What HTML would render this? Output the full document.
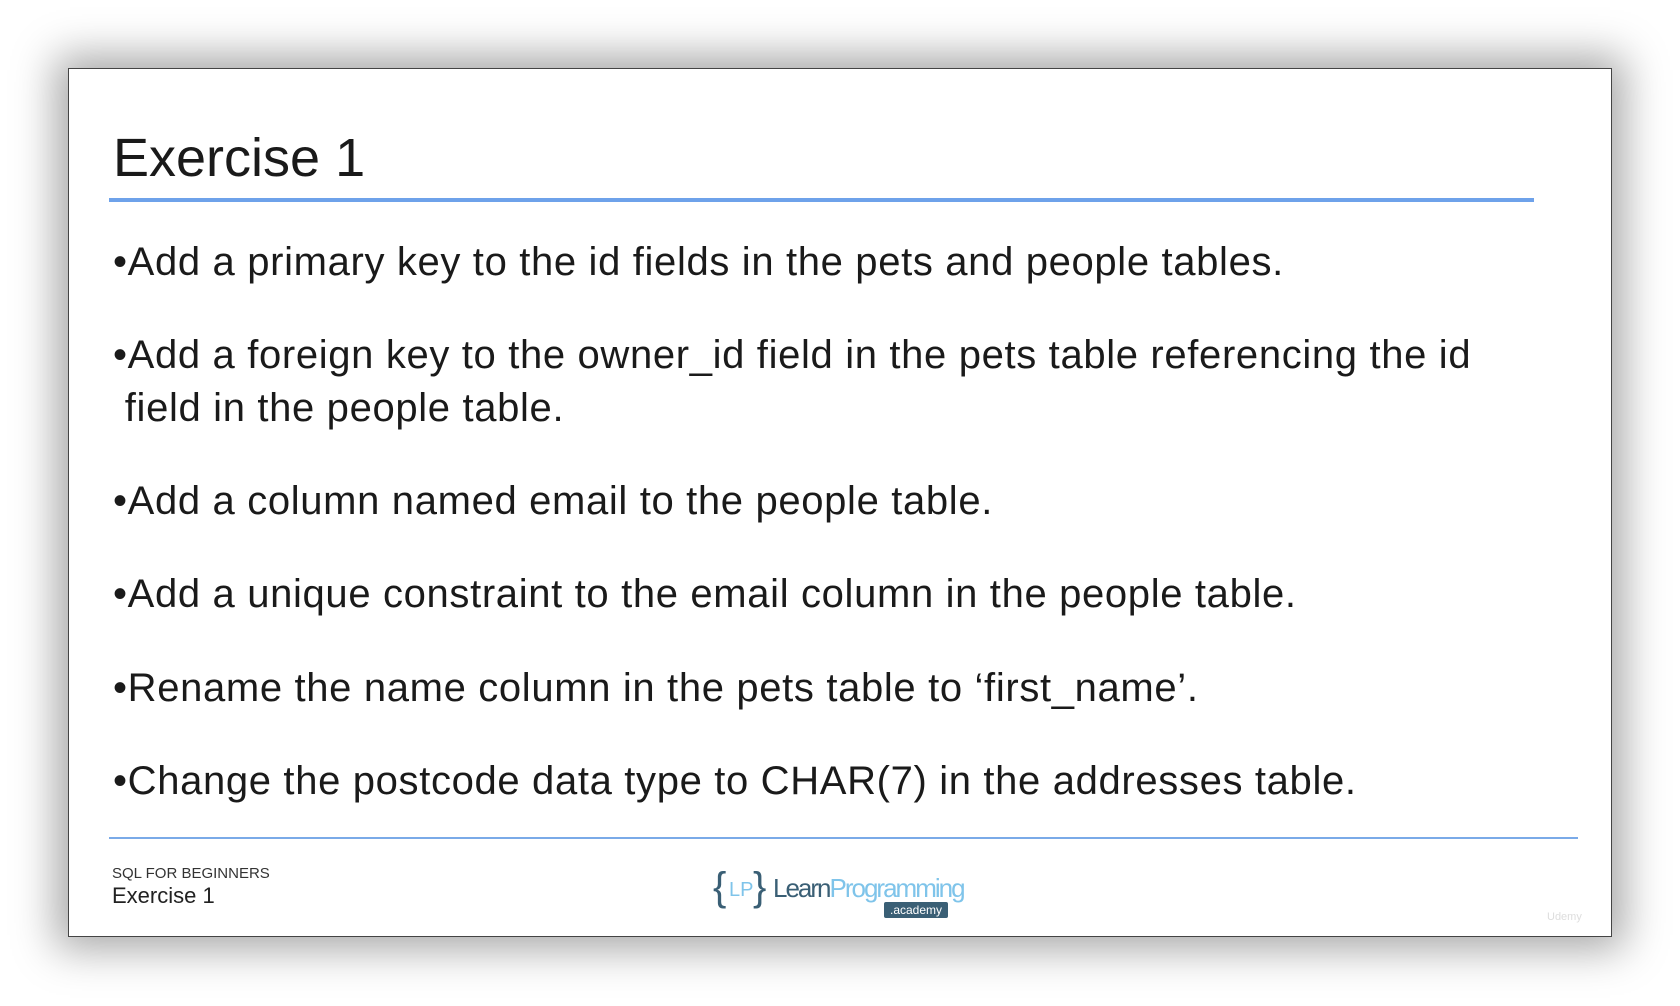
<!DOCTYPE html>
<html><head><meta charset="utf-8"><style>
html,body{margin:0;padding:0;width:1680px;height:1006px;background:#fff;overflow:hidden;font-family:"Liberation Sans",sans-serif;}
.slide{position:absolute;left:68px;top:68px;width:1544px;height:869px;background:#fff;box-shadow:0 0 40px 12px rgba(0,0,0,0.35);border:1px solid #444;box-sizing:border-box;}
.t{position:absolute;white-space:nowrap;color:#1a1a1a;}
.h{left:44px;top:89px;font-size:54px;line-height:0;}
.line1{position:absolute;left:40px;top:129px;width:1425px;height:4px;background:#6ea2ea;}
.line2{position:absolute;left:40px;top:768px;width:1469px;height:2px;background:#7aaae8;}
.b{left:44px;font-size:40px;line-height:0;letter-spacing:0.65px;}
</style></head><body>
<div class="slide">
<div class="t h">Exercise 1</div>
<div class="line1"></div>
<div class="t b" style="top:193px">•Add a primary key to the id fields in the pets and people tables.</div>
<div class="t b" style="top:286px">•Add a foreign key to the owner_id field in the pets table referencing the id</div>
<div class="t b" style="top:339px">&nbsp;field in the people table.</div>
<div class="t b" style="top:432px">•Add a column named email to the people table.</div>
<div class="t b" style="top:525px">•Add a unique constraint to the email column in the people table.</div>
<div class="t b" style="top:619px">•Rename the name column in the pets table to ‘first_name’.</div>
<div class="t b" style="top:712px">•Change the postcode data type to CHAR(7) in the addresses table.</div>
<div class="line2"></div>
<div class="t" style="left:43px;top:796px;font-size:15px;color:#333">SQL FOR BEGINNERS</div>
<div class="t" style="left:43px;top:814px;font-size:22px;color:#222">Exercise 1</div>
<div class="t" style="left:644px;top:796px;font-size:40px;color:#3a5f75;font-weight:300">{</div>
<div class="t" style="left:660px;top:810px;font-size:20px;color:#7fc4ea">LP</div>
<div class="t" style="left:684px;top:796px;font-size:40px;color:#3a5f75">}</div>
<div class="t" style="left:704px;top:804px;font-size:26px;letter-spacing:-2px;"><span style="color:#3a5f75">Learn</span><span style="color:#7fc4ea">Programming</span></div>
<div style="position:absolute;left:815px;top:833px;width:64px;height:16px;background:#3a5f75;border-radius:2px;color:#fff;font-size:12px;line-height:16px;text-align:center;">.academy</div>
<div class="t" style="left:1478px;top:842px;font-size:11px;color:#ddd">Udemy</div>
</div>
</body></html>
